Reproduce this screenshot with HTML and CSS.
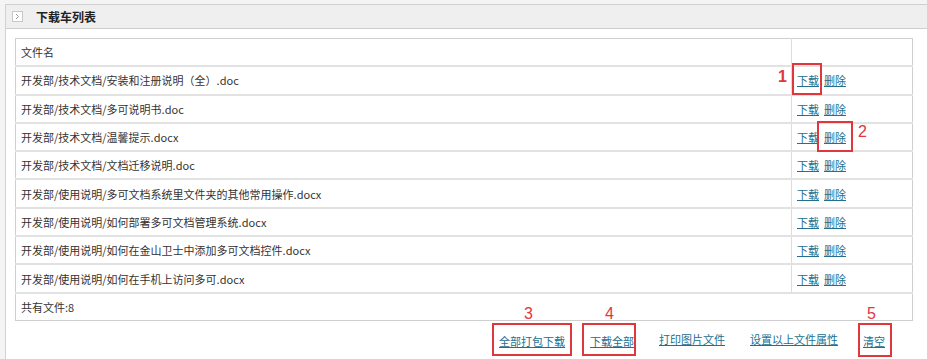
FILE: index.html
```html
<!DOCTYPE html>
<html lang="zh">
<head>
<meta charset="utf-8">
<title>下载车列表</title>
<link rel="stylesheet" href="styles.css">
</head>
<body>
<div class="panel">
  <div class="panel-head">
    <span class="toggle"><svg width="11" height="11" viewBox="0 0 11 11"><rect x="0.5" y="0.5" width="10" height="10" fill="#fff" stroke="#c8c8c8"/><path d="M4 3 L6.5 5.5 L4 8" fill="none" stroke="#9a9a9a" stroke-width="1"/></svg></span>
    <span class="title">下载车列表</span>
  </div>
  <div class="panel-body">
    <table class="files">
      <tr><td class="name">文件名</td><td class="ops"></td></tr>
      <tr><td class="name">开发部/技术文档/安装和注册说明（全）.doc</td><td class="ops"><div class="op-links"><span class="mark"><a href="#">下载</a><span class="box b1"></span><span class="num n1">1</span></span><a href="#">删除</a></div></td></tr>
      <tr><td class="name">开发部/技术文档/多可说明书.doc</td><td class="ops"><div class="op-links"><a href="#">下载</a><a href="#">删除</a></div></td></tr>
      <tr><td class="name">开发部/技术文档/温馨提示.docx</td><td class="ops"><div class="op-links"><a href="#">下载</a><span class="mark"><a href="#">删除</a><span class="box b2"></span><span class="num n2">2</span></span></div></td></tr>
      <tr><td class="name">开发部/技术文档/文档迁移说明.doc</td><td class="ops"><div class="op-links"><a href="#">下载</a><a href="#">删除</a></div></td></tr>
      <tr><td class="name">开发部/使用说明/多可文档系统里文件夹的其他常用操作.docx</td><td class="ops"><div class="op-links"><a href="#">下载</a><a href="#">删除</a></div></td></tr>
      <tr><td class="name">开发部/使用说明/如何部署多可文档管理系统.docx</td><td class="ops"><div class="op-links"><a href="#">下载</a><a href="#">删除</a></div></td></tr>
      <tr><td class="name">开发部/使用说明/如何在金山卫士中添加多可文档控件.docx</td><td class="ops"><div class="op-links"><a href="#">下载</a><a href="#">删除</a></div></td></tr>
      <tr><td class="name">开发部/使用说明/如何在手机上访问多可.docx</td><td class="ops"><div class="op-links"><a href="#">下载</a><a href="#">删除</a></div></td></tr>
      <tr class="last"><td class="name" colspan="2">共有文件:8</td></tr>
    </table>
    <div class="actions">
      <span class="mark"><a href="#">全部打包下载</a><span class="box b3"></span><span class="num n3">3</span></span>
      <span class="mark"><a href="#">下载全部</a><span class="box b4"></span><span class="num n4">4</span></span>
      <a href="#">打印图片文件</a>
      <a href="#">设置以上文件属性</a>
      <span class="mark"><a href="#">清空</a><span class="box b5"></span><span class="num n5">5</span></span>
    </div>
  </div>
</div>
</body>
</html>
```

FILE: styles.css
```css
html, body {
  margin: 0;
  padding: 0;
}
body {
  background: #f4f4f4;
  font-family: "Noto Sans CJK SC", "Liberation Sans", sans-serif;
  font-size: 11px;
  color: #333;
  width: 927px;
  height: 359px;
  overflow: hidden;
}
.panel {
  margin: 4px 0 0 5px;
  background: #fff;
  border-top: 1px solid #cfcfcf;
  border-left: 1px solid #d2d2d2;
  height: 354px;
}
.panel-head {
  height: 23px;
  background: #efefef;
  border-bottom: 1px solid #cdcdcd;
  display: flex;
  align-items: center;
}
.toggle {
  display: flex;
  margin-left: 6px;
  width: 11px;
  height: 11px;
}
.title {
  margin-left: 13px;
  font-size: 12px;
  font-weight: bold;
  color: #222;
}
.panel-body {
  padding: 9px 0 0 9px;
}
.files {
  border-collapse: collapse;
  width: 898px;
  border: 1px solid #cfcfcf;
}
.files td {
  height: 26.3px;
  padding: 0 0 0 5px;
  border-bottom: 2px solid #e2e2e2;
  vertical-align: middle;
  line-height: 14px;
  white-space: nowrap;
}
.files td.ops {
  width: 115px;
  border-left: 1px solid #dcdcdc;
}
.files tr.last td {
  border-bottom: 1px solid #cfcfcf;
}
.op-links {
  display: flex;
  align-items: center;
  gap: 5px;
}
a {
  color: #226f90;
  text-decoration: underline;
}
.ops a {
  font-size: 11px;
}
.mark {
  position: relative;
  display: inline-block;
}
.box {
  position: absolute;
  border: 2px solid #e0363c;
  pointer-events: none;
}
.num {
  position: absolute;
  color: #e0363c;
  font-family: "Liberation Sans", sans-serif;
  font-size: 16px;
  line-height: 16px;
}
.b1 { left: -5px; right: -3px; top: -10px; bottom: -8px; }
.n1 { left: -19px; top: -4px; font-weight: bold; }
.b2 { left: -7px; right: -7px; top: -9px; bottom: -8px; }
.n2 { right: -21px; top: -6px; }
.actions {
  display: flex;
  justify-content: flex-end;
  gap: 25px;
  padding: 12px 42px 0 0;
}
.actions a {
  font-size: 11px;
  line-height: 12px;
}
.b3 { left: -7px; right: -7px; top: -10px; bottom: -7px; }
.n3 { left: 50%; margin-left: -8px; top: -27px; }
.b4 { left: -8px; right: -2px; top: -10px; bottom: -7px; }
.n4 { left: 50%; margin-left: -7px; top: -27px; }
.b5 { left: -5px; right: -7px; top: -10px; bottom: -8px; }
.n5 { left: 50%; margin-left: -7px; top: -27px; }
```
